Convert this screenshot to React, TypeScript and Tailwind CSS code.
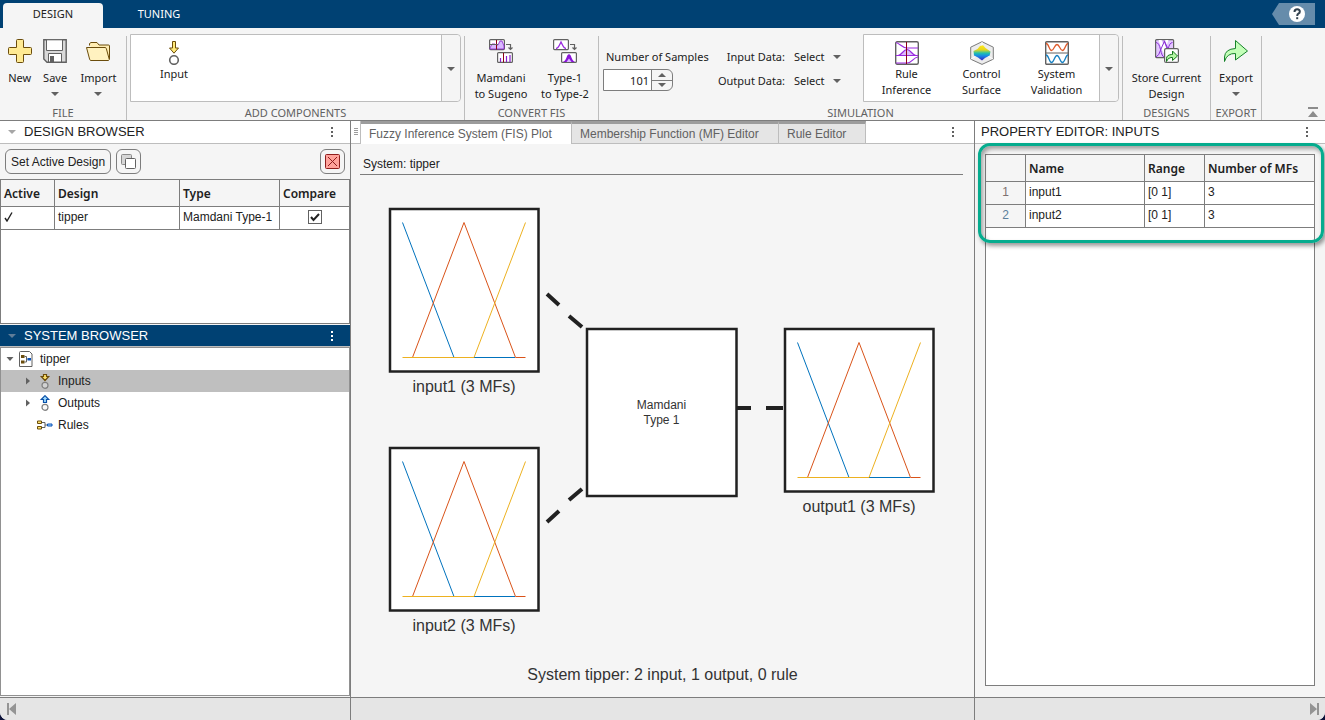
import React, { useState } from "react";

const UI = "font-['Noto_Sans',sans-serif]";

function Caret({ className = "text-[#616161]" }: { className?: string }) {
  return (
    <svg width="8" height="4" viewBox="0 0 8 4" className={className} aria-hidden="true">
      <path d="M0 0h8L4 4z" fill="currentColor" />
    </svg>
  );
}

function Dots({ className }: { className: string }) {
  return (
    <svg width="4" height="12" viewBox="0 0 4 12" className={className} fill="currentColor" aria-hidden="true">
      <path d="M1 1h2v2H1zM1 5h2v2H1zM1 9h2v2H1z" />
    </svg>
  );
}

const iconProps = { width: 24, height: 24, viewBox: "0 0 24 24", fill: "none", "aria-hidden": true } as const;

function NewIcon() {
  return (
    <svg {...iconProps}>
      <path d="M9.5.5h5q1 0 1 1v7h7q1 0 1 1v5q0 1-1 1h-7v7q0 1-1 1h-5q-1 0-1-1v-7h-7q-1 0-1-1v-5q0-1 1-1h7v-7q0-1 1-1z" fill="#ffea93" stroke="#6b4d0c" />
    </svg>
  );
}

function SaveIcon() {
  return (
    <svg {...iconProps}>
      <path d="M.8.8h22.4v22.4H4L.8 20z" fill="#d9d9d9" stroke="#616161" strokeWidth="1.4" />
      <path d="M3.5.8h16v10.7h-16z" fill="#fff" stroke="#616161" />
      <path d="M5.500 23v-8.500h13V23z" fill="#fff" stroke="#616161" />
      <path d="M7 17h4v6H7z" fill="#616161" />
    </svg>
  );
}

function ImportIcon() {
  return (
    <svg {...iconProps}>
      <path d="M3.500 6.500V4.500L5 3.500h6l2 2.500h9.500q1 0 1 1v13l-2 1" fill="#ffedb3" stroke="#6b4d0c" />
      <path d="M.5 8.500h18.500q1 0 1.300 1l3 11-.8 1H5q-1 0-1.300-1z" fill="#fff2c0" stroke="#6b4d0c" />
    </svg>
  );
}

function InputIcon() {
  return (
    <svg {...iconProps}>
      <path d="M10.500.5h3v6.500h3L12 12.200 7.500 7h3z" fill="#ffea7a" stroke="#6b4d0c" />
      <circle cx="12" cy="19" r="4.300" fill="#fff" stroke="#616161" strokeWidth="1.600" />
    </svg>
  );
}

function SugenoIcon() {
  return (
    <svg {...iconProps}>
      <rect x=".6" y=".6" width="14.800" height="10" rx="1" fill="#fff" stroke="#616161" strokeWidth="1.200" />
      <path d="M1 9l2-4h3l1 1h2l2-4h2l2 5v3H1z" fill="#d9b8ff" stroke="#8a1fd0" strokeWidth=".8" />
      <path d="M7.500 1v9.500" stroke="#8b0016" />
      <path d="M1 5.500h8M17 5.500h4.500V10M19.500 8.500l2 2 2-2" stroke="#616161" strokeWidth="1.200" />
      <rect x="8.600" y="13.600" width="14.800" height="9.800" rx="1" fill="#fff" stroke="#616161" strokeWidth="1.200" />
      <path d="M11.500 19v4M17.500 17v6M21 16v7" stroke="#8a1fd0" strokeWidth="1.200" />
      <path d="M14.500 14v9.500" stroke="#8b0016" />
    </svg>
  );
}

function Type2Icon() {
  return (
    <svg {...iconProps}>
      <rect x=".6" y=".6" width="14.800" height="10" rx="1" fill="#fff" stroke="#616161" strokeWidth="1.200" />
      <path d="M3 9.500q2 0 4-4.500l1-2 1 2q2 4.500 4 4.500" stroke="#9a2be0" strokeWidth="1.300" />
      <path d="M17 5.500h4.500V10M19.500 8.500l2 2 2-2" stroke="#616161" strokeWidth="1.200" />
      <rect x="8.600" y="13.600" width="14.800" height="9.800" rx="1" fill="#fff" stroke="#616161" strokeWidth="1.200" />
      <path d="M10 23q2.500-1 4.300-6.500 1.700-2.500 3.400 0Q19.500 22 22 23z" fill="#8a14d8" />
      <path d="M13.500 23l2.500-3.500 2.500 3.500z" fill="#d9b8ff" />
    </svg>
  );
}

function RuleIcon() {
  return (
    <svg {...iconProps}>
      <rect x=".7" y=".7" width="22.600" height="22.600" rx="1.500" fill="#fff" stroke="#616161" strokeWidth="1.400" />
      <path d="M3 14.500l3-1q3-5 6-5t6 5l3 1z" fill="#dcbcfb" />
      <path d="M1 1.500c4 1 6 5.500 11 5.500h11M1 14.500h22M3 14.500c4 0 5-6 9-6s5 6 9 6M1 22h11c5 0 6-5.500 11-6" stroke="#9a2be0" strokeWidth="1.200" />
      <path d="M11.500 1v22" stroke="#8b0016" />
    </svg>
  );
}

function SurfaceIcon() {
  return (
    <svg {...iconProps}>
      <defs>
        <linearGradient id="surface" x1="0" y1="0" x2="0" y2="1">
          <stop offset="0" stopColor="#ffe81a" />
          <stop offset=".3" stopColor="#e5d51c" />
          <stop offset=".52" stopColor="#1fc0ad" />
          <stop offset=".7" stopColor="#1689e8" />
          <stop offset="1" stopColor="#3a1ec0" />
        </linearGradient>
      </defs>
      <path d="M12 .7l11.300 5.500v12L12 23.400.7 18.200v-12z" fill="#ececec" stroke="#7a7a7a" />
      <path d="M12 1v11L1 18M12 12l11 6" stroke="#fff" />
      <path d="M3.500 10l4-2 2.500-3 3-.8 2.500 2.800 5 3.500-.8 4-4.700 2.500-3 2.500-4-3-4-2z" fill="url(#surface)" />
    </svg>
  );
}

function ValidationIcon() {
  return (
    <svg {...iconProps}>
      <rect x=".7" y=".7" width="22.600" height="22.600" rx="1" fill="#fff" stroke="#616161" strokeWidth="1.400" />
      <path d="M1 12h22" stroke="#616161" />
      <path d="M1 2.500c3 0 3 7 5.500 7s3-6 5.500-6 3 6 5.500 6 3-7 5.500-7" stroke="#dd5a2b" strokeWidth="1.300" />
      <path d="M1 14c3 0 3 7.500 5.500 7.500s3-7 5.500-7 3 7 5.500 7 3-7.500 5.500-7.500" stroke="#1780c2" strokeWidth="1.300" />
    </svg>
  );
}

function StoreIcon() {
  return (
    <svg {...iconProps}>
      <rect x=".6" y=".6" width="18" height="18" rx="1" fill="#e3c6ff" stroke="#616161" strokeWidth="1.200" />
      <path d="M3.500 1h3l2 5 2-5h3l-3 9-2 4-2-4z" fill="#fff" />
      <path d="M1 3.500q3 0 4.500 7T9 18M1 18q3-1 5-8l3.500-8 3.500 8q1 3 2 3.500M9 1.500l5 13M17.500 3.500q-3 0-4.500 7L10.500 18" stroke="#8a30d6" />
      <rect x="9.600" y="9.600" width="13.800" height="13.800" rx="1.500" fill="#fff" stroke="#616161" strokeWidth="1.200" />
      <path d="M11.500 22.500v-3q0-3.500 5-4h1v-3.500l5 5-5 4.500v-3h-1.500q-3 0-4.500 4z" fill="#b5f7a5" stroke="#16771d" />
    </svg>
  );
}

function ExportIcon() {
  return (
    <svg {...iconProps}>
      <path d="M.5 22.500V18q.5-8 11-8.500V1.500l12 10.500-12 9v-6.500Q3 14 .5 22.500z" fill="#c4ffb9" stroke="#16822a" />
    </svg>
  );
}

function Section({ label, className = "", children }: { label: string; className?: string; children: React.ReactNode }) {
  return (
    <section aria-label={label} className={`mt-2 flex flex-col border-r border-[#bdbdbd] ${className}`}>
      <div className="flex h-[68px] items-start">{children}</div>
      <div className="h-4 text-center text-[11px] leading-[18px] text-[#616161]">{label}</div>
    </section>
  );
}

function ToolButton({ icon, lines, caret, className }: { icon: React.ReactNode; lines: string[]; caret?: boolean; className: string }) {
  return (
    <button type="button" className={`flex flex-col items-center pt-[3px] leading-4 ${className}`}>
      {icon}
      <span className="mt-[7px] flex flex-col whitespace-nowrap">
        {lines.map((l) => (
          <span key={l}>{l}</span>
        ))}
      </span>
      {caret && <span className="mt-1.5"><Caret /></span>}
    </button>
  );
}

function GalleryItem({ icon, lines, className }: { icon: React.ReactNode; lines: string[]; className: string }) {
  return (
    <button type="button" className={`flex flex-col items-center pt-1.5 leading-4 ${className}`}>
      {icon}
      <span className="mt-px flex flex-col whitespace-nowrap">
        {lines.map((l) => (
          <span key={l}>{l}</span>
        ))}
      </span>
    </button>
  );
}

function Gallery({ className, children }: { className: string; children: React.ReactNode }) {
  return (
    <div className={`-mt-0.5 flex h-[68px] rounded-r border border-[#bdbdbd] bg-white ${className}`}>
      <div className="flex flex-1 items-start">{children}</div>
      <button type="button" aria-label="More" className="flex w-[19px] items-center justify-center rounded-r border-l border-[#bdbdbd] bg-[#f5f5f5] pt-0.5">
        <Caret />
      </button>
    </div>
  );
}

function DataSelect({ id, label }: { id: string; label: string }) {
  return (
    <div className="flex h-6 items-center">
      <label htmlFor={id} className="w-[76px] text-right whitespace-nowrap">{label}</label>
      <div className="relative ml-[9px] flex items-center">
        <select id={id} className="w-[47px] appearance-none bg-transparent p-0">
          <option>Select</option>
        </select>
        <span className="pointer-events-none absolute right-0"><Caret /></span>
      </div>
    </div>
  );
}

function Toolstrip() {
  const [samples, setSamples] = useState(101);
  return (
    <div className={`flex h-[93px] shrink-0 border-b border-[#7d7d7d] bg-[#f5f5f5] text-[11px] text-[#212121] ${UI}`}>
      <Section label="FILE" className="w-[127px]">
        <ToolButton icon={<NewIcon />} lines={["New"]} className="w-10" />
        <ToolButton icon={<SaveIcon />} lines={["Save"]} caret className="w-8" />
        <ToolButton icon={<ImportIcon />} lines={["Import"]} caret className="w-14" />
      </Section>
      <Section label="ADD COMPONENTS" className="min-w-[160px] flex-1">
        <Gallery className="mx-[3px] flex-1">
          <GalleryItem icon={<InputIcon />} lines={["Input"]} className="w-[86px]" />
        </Gallery>
      </Section>
      <Section label="CONVERT FIS" className="w-[134px]">
        <ToolButton icon={<SugenoIcon />} lines={["Mamdani", "to Sugeno"]} className="w-[72px]" />
        <ToolButton icon={<Type2Icon />} lines={["Type-1", "to Type-2"]} className="w-14" />
      </Section>
      <Section label="SIMULATION" className="w-[524px]">
        <div className="ml-1 w-[106px]">
          <label htmlFor="samples" className="mt-[13px] ml-[3px] block leading-4 whitespace-nowrap">Number of Samples</label>
          <div className="mt-1 flex h-[22px] w-[70px] overflow-hidden rounded-r-md border border-[#7d7d7d]">
            <input
              id="samples"
              value={samples}
              onChange={(e) => setSamples(Number(e.target.value) || 0)}
              className="w-12 border-r border-[#7d7d7d] bg-white pt-0.5 pr-0.5 text-right"
            />
            <span className="flex flex-1 flex-col">
              <button type="button" aria-label="Increase" onClick={() => setSamples(samples + 1)} className="flex flex-1 items-center justify-center border-b border-[#7d7d7d]">
                <span className="rotate-180"><Caret /></span>
              </button>
              <button type="button" aria-label="Decrease" onClick={() => setSamples(samples - 1)} className="flex flex-1 items-center justify-center">
                <Caret />
              </button>
            </span>
          </div>
        </div>
        <div className="mt-[9px] flex flex-col">
          <DataSelect id="input-data" label="Input Data:" />
          <DataSelect id="output-data" label="Output Data:" />
        </div>
        <Gallery className="mr-[3px] ml-auto w-[256px] pl-[5px]">
          <GalleryItem icon={<RuleIcon />} lines={["Rule", "Inference"]} className="w-[75px]" />
          <GalleryItem icon={<SurfaceIcon />} lines={["Control", "Surface"]} className="w-[75px]" />
          <GalleryItem icon={<ValidationIcon />} lines={["System", "Validation"]} className="w-[75px]" />
        </Gallery>
      </Section>
      <Section label="DESIGNS" className="w-[88px]">
        <ToolButton icon={<StoreIcon />} lines={["Store Current", "Design"]} className="w-full" />
      </Section>
      <Section label="EXPORT" className="w-[51px]">
        <ToolButton icon={<ExportIcon />} lines={["Export"]} caret className="w-full" />
      </Section>
      <div className="flex w-[63px] items-end justify-end pr-1.5 pb-[3px]">
        <button type="button" aria-label="Minimize toolstrip">
          <svg width="12" height="10" viewBox="0 0 12 10" className="text-[#8c8c8c]" fill="currentColor" aria-hidden="true">
            <path d="M1 0h10v2H1zM6 4l5 6H1z" />
          </svg>
        </button>
      </div>
    </div>
  );
}

function PanelHeader({ title, dark, caret }: { title: string; dark?: boolean; caret?: boolean }) {
  return (
    <header className={`flex shrink-0 items-center border-b border-[#bdbdbd] pr-4 text-[13px] ${dark ? "h-[22px] bg-[#004173] text-white" : "h-[23px] bg-white text-[#212121]"}`}>
      {caret ? (
        <span className="flex w-6 pl-2"><Caret className={dark ? "text-[#5f7d98]" : "text-[#a6a6a6]"} /></span>
      ) : (
        <span className="w-1.5" />
      )}
      <h2>{title}</h2>
      <button type="button" aria-label={`${title} menu`} className="ml-auto">
        <Dots className={dark ? "text-white" : "text-[#616161]"} />
      </button>
    </header>
  );
}

const cell = "border border-[#7d7d7d] px-[3px]";
const head = `${cell} h-[27px] bg-[#f5f5f5] pt-0.5 text-left font-semibold`;
const body = `${cell} pb-0.5 leading-4`;

function DesignBrowser() {
  return (
    <section className="flex h-[203px] shrink-0 flex-col">
      <PanelHeader title="DESIGN BROWSER" caret />
      <div className="flex h-[35px] shrink-0 items-center gap-[5px] bg-[#f5f5f5] px-[5px]">
        <button type="button" className="h-[25px] rounded-md border border-[#7d7d7d] px-[5px] whitespace-nowrap">Set Active Design</button>
        <button type="button" aria-label="Duplicate design" className="flex h-[25px] w-[25px] items-center justify-center rounded-md border border-[#7d7d7d]">
          <svg width="15" height="15" viewBox="0 0 15 15" aria-hidden="true">
            <rect x=".5" y=".5" width="10" height="10" rx="1" fill="#d6d6d6" stroke="#8a8a8a" />
            <rect x="4.500" y="4.500" width="10" height="10" rx="1" fill="#fff" stroke="#616161" />
          </svg>
        </button>
        <button type="button" aria-label="Delete design" className="ml-auto flex h-[25px] w-[25px] items-center justify-center rounded-md border border-[#7d7d7d]">
          <svg width="15" height="15" viewBox="0 0 15 15" aria-hidden="true">
            <rect x=".5" y=".5" width="14" height="14" rx="1" fill="#ffa29b" stroke="#8f1d1d" />
            <path d="M3 3l9 9M12 3l-9 9" stroke="#8f1d1d" />
          </svg>
        </button>
      </div>
      <div className="flex-1 border border-[#7d7d7d] bg-white">
        <table className="-mt-px -ml-px w-[calc(100%+2px)] table-fixed border-collapse">
          <thead className={UI}>
            <tr>
              <th className={`${head} w-[54px]`}>Active</th>
              <th className={head}>Design</th>
              <th className={`${head} w-[100px]`}>Type</th>
              <th className={`${head} w-[70px]`}>Compare</th>
            </tr>
          </thead>
          <tbody>
            <tr className="h-[23px]">
              <td className={body}>
                <svg width="9" height="10" viewBox="0 0 9 10" fill="none" role="img" aria-label="Active">
                  <path d="M1 6l2 3L8 .5" stroke="#212121" strokeWidth="1.400" />
                </svg>
              </td>
              <td className={body}>tipper</td>
              <td className={`${body} whitespace-nowrap`}>Mamdani Type-1</td>
              <td className={body}>
                <label className="relative mx-auto flex h-3.5 w-3.5">
                  <input type="checkbox" aria-label="Compare tipper" defaultChecked className="peer h-3.5 w-3.5 appearance-none border border-[#616161] bg-white" />
                  <svg width="14" height="14" viewBox="0 0 14 14" fill="none" className="pointer-events-none invisible absolute inset-0 peer-checked:visible" aria-hidden="true">
                    <path d="M3 7l2.500 3L11 4" stroke="#212121" strokeWidth="2" />
                  </svg>
                </label>
              </td>
            </tr>
          </tbody>
        </table>
      </div>
    </section>
  );
}

function TreeArrow({ open }: { open?: boolean }) {
  return (
    <svg width="8" height="8" viewBox="0 0 8 8" fill="#616161" aria-hidden="true">
      <path d={open ? "M.5 2h7l-3.500 4z" : "M2 .5v7l4-3.500z"} />
    </svg>
  );
}

function PortIcon({ output }: { output?: boolean }) {
  return (
    <svg width="16" height="16" viewBox="0 0 16 16" fill="none" aria-hidden="true">
      {output ? (
        <path d="M8 .7L4.300 4.500h2.200v3h3v-3h2.200z" fill="#9fdcff" stroke="#0a50a8" strokeWidth="1.200" />
      ) : (
        <path d="M6.500 1.500h3v2h2.200L8 7.500l-3.700-4h2.200z" fill="#ffe36b" stroke="#6b4d0c" strokeWidth="1.200" />
      )}
      <circle cx="8" cy="12.300" r="3" fill="#f0f0f0" fillOpacity=".4" stroke="#808080" strokeWidth="1.200" />
    </svg>
  );
}

function SystemBrowser() {
  const row = "flex h-[22px] items-center";
  return (
    <section className="mt-px flex min-h-0 flex-1 flex-col">
      <PanelHeader title="SYSTEM BROWSER" dark caret />
      <ul className="mb-px flex-1 border border-[#919191] bg-white">
        <li>
          <div className={`${row} pl-[5px]`}>
            <TreeArrow open />
            <svg width="16" height="16" viewBox="0 0 16 16" fill="none" className="ml-1" aria-hidden="true">
              <path d="M2.500.5h9l2.500 2.500v12.500h-12.500v-14q0-1 1-1z" fill="#fff" stroke="#616161" />
              <path d="M3 4h3.500v3H3zM3 9.500h3.500v3H3z" fill="#6b4d0c" />
              <path d="M6.500 5.500H8.500v5.500H6.500M8.500 8.200h1" stroke="#616161" />
              <path d="M9.500 7h3.500v2.500H9.500z" fill="#0a50b8" />
            </svg>
            <span className="ml-1.5">tipper</span>
          </div>
          <ul>
            <li className={`${row} bg-[#bfbfbf] pl-[23px]`}>
              <TreeArrow /><span className="mx-[5px]"><PortIcon /></span>Inputs
            </li>
            <li className={`${row} pl-[23px]`}>
              <TreeArrow /><span className="mx-[5px]"><PortIcon output /></span>Outputs
            </li>
            <li className={`${row} pl-9`}>
              <svg width="16" height="16" viewBox="0 0 16 16" fill="none" className="mr-[5px]" aria-hidden="true">
                <path d="M5 5.500h3v5H5M8 8h3" stroke="#616161" />
                <path d="M.5 4h4v2.500h-4zM.5 9.500h4V12h-4z" fill="#ffe36b" stroke="#6b4d0c" />
                <path d="M10.500 7h4.500v2h-4.500z" fill="#9fdcff" stroke="#0a50b8" />
              </svg>
              Rules
            </li>
          </ul>
        </li>
      </ul>
    </section>
  );
}

function MembershipPlot() {
  return (
    <svg width="150" height="164" viewBox="0 0 150 164" fill="none" className="overflow-visible" aria-hidden="true">
      <rect x="1" y="1" width="148.500" height="162.500" fill="#fff" stroke="#212121" strokeWidth="2.500" />
      <path d="M13.500 14.500L65 149.500M85 149.500h41" stroke="#0072bd" />
      <path d="M23.500 149.500L75 14.500l51.500 135h10" stroke="#d95319" />
      <path d="M13.500 149.500H85l51.500-135" stroke="#edb120" />
    </svg>
  );
}

function VariableNode({ name, className }: { name: string; className: string }) {
  return (
    <figure className={`absolute flex w-[150px] flex-col items-center ${className}`}>
      <MembershipPlot />
      <figcaption className="mt-[3px] text-base leading-6 whitespace-nowrap">{name} (3 MFs)</figcaption>
    </figure>
  );
}

function FisPlot() {
  return (
    <div className="relative mx-auto h-[520px] w-[605px] text-[#333]">
      <svg width="605" height="520" viewBox="0 0 605 520" className="absolute inset-0" fill="none" stroke="#212121" strokeWidth="4" aria-hidden="true">
        <path d="M187 119l12 11M209 141l13 11M187 347l12-11M209 325l13-11M377 233h14M406 233h17" />
        <rect x="227" y="154" width="149.500" height="167" fill="#fff" strokeWidth="2.500" />
      </svg>
      <VariableNode name="input1" className="top-[33px] left-[29px]" />
      <VariableNode name="input2" className="top-[272px] left-[29px]" />
      <div className="absolute top-[153px] left-[226px] flex h-[169px] w-[151px] flex-col items-center justify-center leading-[15px]">
        <span>Mamdani</span>
        <span>Type 1</span>
      </div>
      <VariableNode name="output1" className="top-[153px] left-[424px]" />
      <p className="absolute top-[488px] left-0 w-full text-center text-base leading-6">System tipper: 2 input, 1 output, 0 rule</p>
    </div>
  );
}

function DocumentArea() {
  const tab = "border-t-[3px] border-t-[#9c9c9c] border-r border-r-[#bdbdbd] pl-2 text-left text-[#616161] whitespace-nowrap";
  return (
    <main className="flex min-w-[606px] flex-1 flex-col">
      <div className="flex h-[23px] shrink-0 bg-white" role="tablist">
        <span className="flex w-[10px] items-center justify-center border-r border-b border-[#bdbdbd]">
          <svg width="4" height="8" viewBox="0 0 4 8" fill="#9c9c9c" aria-hidden="true">
            <path d="M0 0h4v1H0zM0 2h4v1H0zM0 4h4v1H0zM0 6h4v1H0z" />
          </svg>
        </span>
        <button type="button" role="tab" aria-selected="true" className={`${tab} w-[211px]`}>Fuzzy Inference System (FIS) Plot</button>
        <button type="button" role="tab" aria-selected="false" className={`${tab} w-[207px] border-b border-b-[#bdbdbd] bg-[#e5e5e5]`}>Membership Function (MF) Editor</button>
        <button type="button" role="tab" aria-selected="false" className={`${tab} w-[87px] border-b border-b-[#bdbdbd] bg-[#e5e5e5]`}>Rule Editor</button>
        <span className="flex flex-1 items-center justify-end border-b border-[#bdbdbd] pr-[19px]">
          <button type="button" aria-label="Document menu"><Dots className="text-[#616161]" /></button>
        </span>
      </div>
      <h1 className="mr-[11px] ml-[9px] h-[31px] shrink-0 border-b border-[#7d7d7d] px-[3px] pt-3 leading-4">System: tipper</h1>
      <FisPlot />
    </main>
  );
}

const inputs = [
  { name: "input1", range: "[0 1]", mfs: 3, tint: "text-[#7d7070]" },
  { name: "input2", range: "[0 1]", mfs: 3, tint: "text-[#5b7f9c]" },
];

function PropertyEditor() {
  return (
    <aside className="relative flex w-[351px] shrink-0 flex-col border-l border-[#7d7d7d]">
      <PanelHeader title="PROPERTY EDITOR: INPUTS" />
      <div className="mt-[10px] mr-2.5 mb-[11px] ml-2.5 flex-1 border border-[#7d7d7d] bg-white">
        <table className="-mt-px -ml-px w-[calc(100%+2px)] table-fixed border-collapse">
          <thead className={UI}>
            <tr>
              <th className={`${head} w-10`} aria-label="Index" />
              <th className={head}>Name</th>
              <th className={`${head} w-[60px]`}>Range</th>
              <th className={`${head} w-[110px] whitespace-nowrap`}>Number of MFs</th>
            </tr>
          </thead>
          <tbody>
            {inputs.map((r, i) => (
              <tr key={r.name} className="h-[23px]">
                <td className={`${body} bg-[#f5f5f5] text-center ${r.tint}`}>{i + 1}</td>
                <td className={body}>{r.name}</td>
                <td className={body}>{r.range}</td>
                <td className={body}>{r.mfs}</td>
              </tr>
            ))}
          </tbody>
        </table>
      </div>
      <div className="pointer-events-none absolute top-[22px] right-px left-[3px] h-[100px] rounded-xl border-[3px] border-[#05ac8e] shadow-[2px_3px_4px_rgba(0,0,0,0.4),inset_2px_3px_4px_rgba(0,0,0,0.35)]" />
    </aside>
  );
}

export default function App() {
  return (
    <div className="bg-[#0b1138] font-['Liberation_Sans',Arial,sans-serif] text-xs text-[#212121]">
      <div className="flex min-h-screen flex-col overflow-hidden rounded-b-lg bg-[#f5f5f5]">
        <nav className={`flex h-7 shrink-0 items-end bg-[#004173] text-[11px] ${UI}`}>
          <button type="button" className="ml-[3px] h-[25px] w-[100px] rounded-t-sm bg-[#f5f5f5] pb-0.5">DESIGN</button>
          <button type="button" className="h-[25px] w-[112px] pb-0.5 text-white">TUNING</button>
          <button type="button" aria-label="Help" className="mr-2.5 mb-[3px] ml-auto">
            <svg width="43" height="22" viewBox="0 0 43 22" aria-hidden="true">
              <path d="M0 11L7 0h36v22H7z" fill="#668cab" />
              <circle cx="25" cy="11" r="8" fill="#fff" />
              <path d="M22.500 9q0-2.700 2.700-2.700T27.800 8.700q0 1.300-1.400 2-1.200.8-1.200 2.300" fill="none" stroke="#33424f" strokeWidth="2" />
              <path d="M24.200 14.200h2v2h-2z" fill="#33424f" />
            </svg>
          </button>
        </nav>
        <Toolstrip />
        <div className="flex min-h-0 flex-1">
          <div className="flex w-[351px] shrink-0 flex-col border-r border-[#7d7d7d]">
            <DesignBrowser />
            <SystemBrowser />
          </div>
          <DocumentArea />
          <PropertyEditor />
        </div>
        <footer className="flex h-[23px] shrink-0 border-t border-[#7d7d7d] bg-[#e5e5e5]">
          <div className="flex w-[351px] items-center border-r border-[#7d7d7d] pl-[7px]">
            <button type="button" aria-label="Collapse left panel">
              <svg width="9" height="12" viewBox="0 0 9 12" fill="#949494" aria-hidden="true"><path d="M0 0h2v12H0zM9 0v12L2 6z" /></svg>
            </button>
          </div>
          <div className="flex-1" />
          <div className="flex w-[351px] items-center justify-end border-l border-[#7d7d7d] pr-1.5">
            <button type="button" aria-label="Collapse right panel">
              <svg width="9" height="12" viewBox="0 0 9 12" fill="#949494" aria-hidden="true"><path d="M7 0h2v12H7zM0 0v12l7-6z" /></svg>
            </button>
          </div>
        </footer>
      </div>
    </div>
  );
}
